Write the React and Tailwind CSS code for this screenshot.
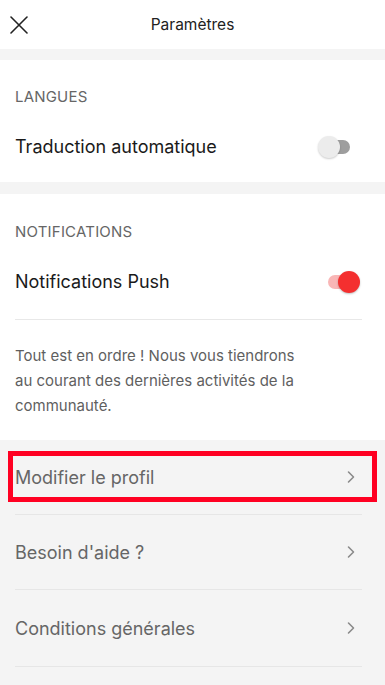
import React from "react";

function Toggle({ on }) {
  if (on) {
    return (
      <div className="relative h-[14px] w-[30px] rounded-full bg-[#f9b6b6]">
        <div className="absolute right-[-2px] top-[-4px] h-[22px] w-[22px] rounded-full bg-[#f42f2f] shadow-[0_1px_2px_rgba(0,0,0,0.25)]" />
      </div>
    );
  }
  return (
    <div className="relative h-[14px] w-[30px] rounded-full bg-[#9e9e9e]">
      <div className="absolute left-[-2px] top-[-4px] h-[22px] w-[22px] rounded-full bg-[#ececec] shadow-[0_1px_2px_rgba(0,0,0,0.2)]" />
    </div>
  );
}

function Chevron() {
  return (
    <svg width="10" height="14" viewBox="0 0 10 14" fill="none">
      <path d="M2.5 2 L7.5 7 L2.5 12" stroke="#8a8a8a" strokeWidth="1.6" strokeLinecap="round" strokeLinejoin="round" />
    </svg>
  );
}

export default function App() {
  return (
    <div className="h-[685px] w-[385px] overflow-hidden bg-[#f4f4f4] font-['Inter',sans-serif]">
      <div className="flex h-[49px] items-center bg-white px-[10px]">
        <svg width="18" height="18" viewBox="0 0 18 18">
          <path d="M1 1 L17 17 M17 1 L1 17" stroke="#222" strokeWidth="1.6" strokeLinecap="round" />
        </svg>
        <div className="flex-1 pr-[18px] text-center text-[15.5px] text-[#222]">Paramètres</div>
      </div>
      <div className="h-[11px]" />
      <div className="bg-white px-[15px] pb-[24px]">
        <div className="pt-[27px] text-[15px] leading-[20px] tracking-[0.2px] text-[#666]">LANGUES</div>
        <div className="mt-[29px] flex items-center justify-between">
          <div className="text-[18px] leading-[22px] text-[#1a1a1a]">Traduction automatique</div>
          <div className="mr-[20px]">
            <Toggle on={false} />
          </div>
        </div>
      </div>
      <div className="h-[12px]" />
      <div className="bg-white px-[15px]">
        <div className="pt-[28px] text-[15px] leading-[20px] tracking-[0.2px] text-[#666]">NOTIFICATIONS</div>
        <div className="mt-[29px] flex items-center justify-between">
          <div className="text-[18px] leading-[22px] text-[#1a1a1a]">Notifications Push</div>
          <div className="mr-[12px]">
            <Toggle on={true} />
          </div>
        </div>
        <div className="mr-[8px] mt-[26px] h-px bg-[#e8e8e8]" />
        <div className="pb-[22px] pt-[23px] pr-[60px] text-[15px] leading-[25px] text-[#5f5f5f]">
          Tout est en ordre ! Nous vous tiendrons au courant des dernières activités de la communauté.
        </div>
      </div>
      <div className="px-[15px]">
        <div className="relative flex h-[74px] items-center justify-between pr-[14px]">
          <div className="text-[18px] text-[#666]">Modifier le profil</div>
          <Chevron />
          <div className="pointer-events-none absolute left-[-7px] right-[-7px] top-[11px] h-[51px] border-[5px] border-[#ff0022]" />
        </div>
        <div className="mr-[8px] h-px bg-[#e6e6e6]" />
        <div className="flex h-[74px] items-center justify-between pr-[14px]">
          <div className="text-[18px] text-[#666]">Besoin d'aide ?</div>
          <Chevron />
        </div>
        <div className="mr-[8px] h-px bg-[#e6e6e6]" />
        <div className="flex h-[76px] items-center justify-between pr-[14px]">
          <div className="text-[18px] text-[#666]">Conditions générales</div>
          <Chevron />
        </div>
        <div className="mr-[8px] h-px bg-[#e6e6e6]" />
      </div>
    </div>
  );
}
